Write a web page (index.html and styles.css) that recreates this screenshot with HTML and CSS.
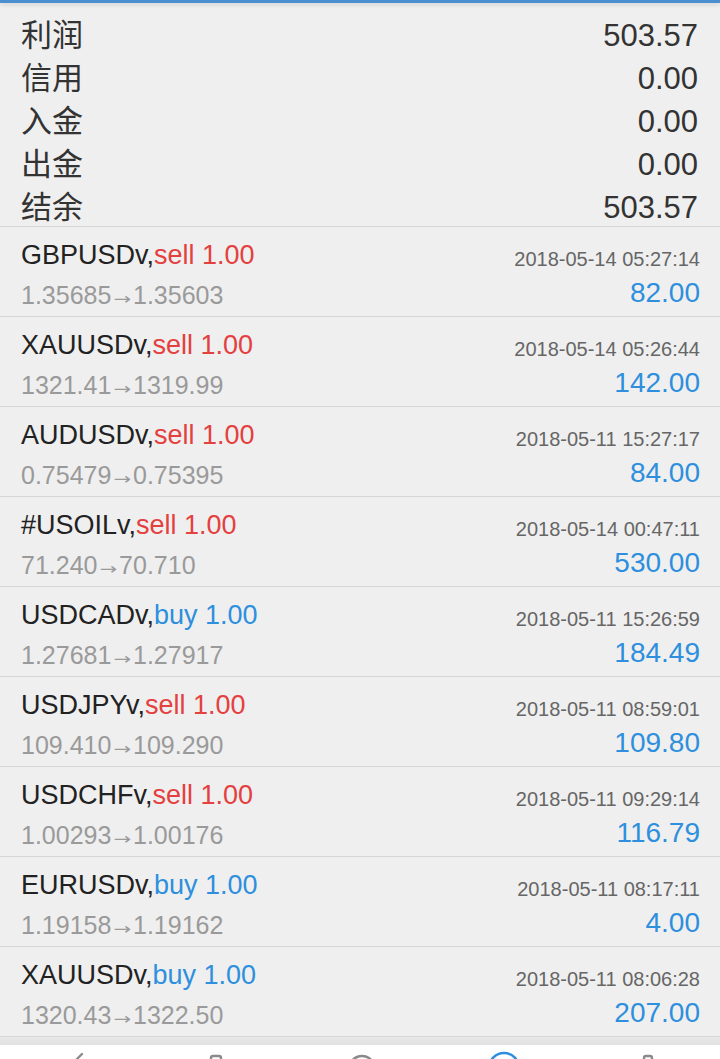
FILE: index.html
```html
<!DOCTYPE html>
<html lang="zh-CN">

<head>
    <meta charset="UTF-8">
    <meta name="viewport" content="width=device-width, initial-scale=1.0">
    <title>历史</title>
    <link rel="stylesheet" href="styles.css">
</head>

<body>
    <div class="top-line"></div>

    <!-- Account summary -->
    <div class="summary">
        <div class="summary-row"><span>利润</span><span>503.57</span></div>
        <div class="summary-row"><span>信用</span><span>0.00</span></div>
        <div class="summary-row"><span>入金</span><span>0.00</span></div>
        <div class="summary-row"><span>出金</span><span>0.00</span></div>
        <div class="summary-row"><span>结余</span><span>503.57</span></div>
    </div>

    <!-- Closed orders -->
    <div class="orders">
        <div class="order">
            <div class="order-left">
                <div class="symbol">GBPUSDv,<span class="sell">sell 1.00</span></div>
                <div class="prices">1.35685<span class="arrow">→</span>1.35603</div>
            </div>
            <div class="order-right">
                <div class="time">2018-05-14 05:27:14</div>
                <div class="profit">82.00</div>
            </div>
        </div>
        <div class="order">
            <div class="order-left">
                <div class="symbol">XAUUSDv,<span class="sell">sell 1.00</span></div>
                <div class="prices">1321.41<span class="arrow">→</span>1319.99</div>
            </div>
            <div class="order-right">
                <div class="time">2018-05-14 05:26:44</div>
                <div class="profit">142.00</div>
            </div>
        </div>
        <div class="order">
            <div class="order-left">
                <div class="symbol">AUDUSDv,<span class="sell">sell 1.00</span></div>
                <div class="prices">0.75479<span class="arrow">→</span>0.75395</div>
            </div>
            <div class="order-right">
                <div class="time">2018-05-11 15:27:17</div>
                <div class="profit">84.00</div>
            </div>
        </div>
        <div class="order">
            <div class="order-left">
                <div class="symbol">#USOILv,<span class="sell">sell 1.00</span></div>
                <div class="prices">71.240<span class="arrow">→</span>70.710</div>
            </div>
            <div class="order-right">
                <div class="time">2018-05-14 00:47:11</div>
                <div class="profit">530.00</div>
            </div>
        </div>
        <div class="order">
            <div class="order-left">
                <div class="symbol">USDCADv,<span class="buy">buy 1.00</span></div>
                <div class="prices">1.27681<span class="arrow">→</span>1.27917</div>
            </div>
            <div class="order-right">
                <div class="time">2018-05-11 15:26:59</div>
                <div class="profit">184.49</div>
            </div>
        </div>
        <div class="order">
            <div class="order-left">
                <div class="symbol">USDJPYv,<span class="sell">sell 1.00</span></div>
                <div class="prices">109.410<span class="arrow">→</span>109.290</div>
            </div>
            <div class="order-right">
                <div class="time">2018-05-11 08:59:01</div>
                <div class="profit">109.80</div>
            </div>
        </div>
        <div class="order">
            <div class="order-left">
                <div class="symbol">USDCHFv,<span class="sell">sell 1.00</span></div>
                <div class="prices">1.00293<span class="arrow">→</span>1.00176</div>
            </div>
            <div class="order-right">
                <div class="time">2018-05-11 09:29:14</div>
                <div class="profit">116.79</div>
            </div>
        </div>
        <div class="order">
            <div class="order-left">
                <div class="symbol">EURUSDv,<span class="buy">buy 1.00</span></div>
                <div class="prices">1.19158<span class="arrow">→</span>1.19162</div>
            </div>
            <div class="order-right">
                <div class="time">2018-05-11 08:17:11</div>
                <div class="profit">4.00</div>
            </div>
        </div>
        <div class="order">
            <div class="order-left">
                <div class="symbol">XAUUSDv,<span class="buy">buy 1.00</span></div>
                <div class="prices">1320.43<span class="arrow">→</span>1322.50</div>
            </div>
            <div class="order-right">
                <div class="time">2018-05-11 08:06:28</div>
                <div class="profit">207.00</div>
            </div>
        </div>
    </div>

    <!-- Tab bar (cut off by the window) -->
    <div class="tab-shadow"></div>
    <div class="tab-bar">
        <div class="tab">
            <svg width="36" height="36" viewBox="0 0 36 36" fill="none" stroke="#8a8a8a" stroke-width="2.4" stroke-linecap="round">
                <path d="M4 16 L12 20 L20 12 L28 4" />
            </svg>
        </div>
        <div class="tab">
            <svg width="36" height="36" viewBox="0 0 36 36" fill="none" stroke="#8a8a8a" stroke-width="2.4">
                <rect x="13" y="6" width="10" height="22" rx="2" />
            </svg>
        </div>
        <div class="tab">
            <svg width="36" height="36" viewBox="0 0 36 36" fill="none" stroke="#8a8a8a" stroke-width="2.4" stroke-linecap="round">
                <path d="M4 22 C8 10 14 6 20 6 C26 6 30 10 32 14" />
            </svg>
        </div>
        <div class="tab">
            <svg width="36" height="36" viewBox="0 0 36 36" fill="none" stroke="#2d8fdd" stroke-width="2.6">
                <circle cx="18" cy="18" r="15" />
            </svg>
        </div>
        <div class="tab">
            <svg width="36" height="36" viewBox="0 0 36 36" fill="none" stroke="#8a8a8a" stroke-width="2.4">
                <rect x="14" y="6" width="8" height="10" rx="2" />
            </svg>
        </div>
    </div>
</body>

</html>
```

FILE: styles.css
```css
/* Base styling */
body {
    margin: 0;
    background-color: #efefef;
    font-family: "Liberation Sans", "Noto Sans CJK SC", sans-serif;
    color: #2b2b2b;
    overflow: hidden;
}

.top-line {
    height: 3px;
    background: #4a8fd0;
    box-shadow: 0 2px 4px rgba(0, 0, 0, 0.12);
}

/* Summary */
.summary {
    height: 212px;
    padding: 11px 22px 0 21px;
    border-bottom: 1px solid #d6d6d6;
}

.summary-row {
    display: flex;
    justify-content: space-between;
    font-size: 31px;
    line-height: 43px;
    color: #333;
}

/* Orders */
.order {
    display: flex;
    justify-content: space-between;
    height: 90px;
    box-sizing: border-box;
    padding: 8px 20px 0 21px;
    border-bottom: 1px solid #d6d6d6;
}

.symbol {
    font-size: 27px;
    line-height: 40px;
    color: #222;
}

.sell {
    color: #e4403f;
}

.buy {
    color: #2d8fdd;
}

.prices {
    font-size: 25px;
    line-height: 40px;
    color: #9a9a9a;
}

.arrow {
    display: inline-block;
    font-family: "DejaVu Sans", sans-serif;
    font-size: 21px;
    margin: 0 2px;
    transform: translateY(2px) scaleY(0.75);
}

.order-right {
    text-align: right;
    padding-top: 7px;
}

.time {
    font-size: 20px;
    line-height: 34px;
    color: #666;
}

.profit {
    font-size: 28px;
    line-height: 34px;
    color: #2d8fdd;
}

/* Tab bar */
.tab-shadow {
    height: 8px;
    background: linear-gradient(#e8e8e8, #e1e1e1);
}

.tab-bar {
    display: flex;
    height: 90px;
    background: #fff;
    padding-top: 5px;
}

.tab {
    flex: 1;
    display: flex;
    justify-content: center;
}
```
